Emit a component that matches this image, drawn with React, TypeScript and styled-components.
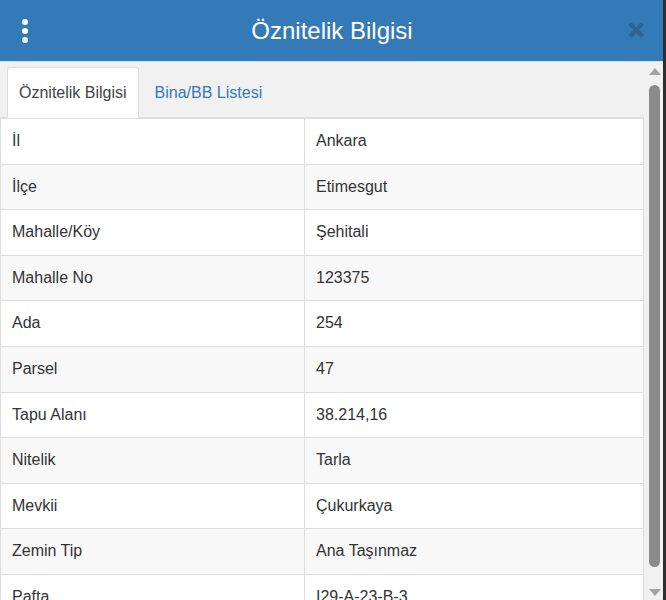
import styled, { createGlobalStyle } from "styled-components";

const GlobalStyle = createGlobalStyle`
    body {
        margin: 0;
        font-family: "Liberation Sans", Arial, sans-serif;
        background: #ffffff;
    }
`;

const Window = styled.div`
    width: 666px;
    height: 600px;
    box-sizing: border-box;
    border-right: 3px solid #2e2e2e;
    display: flex;
    flex-direction: column;
    overflow: hidden;
    background: #f1f1f1;
`;

const Header = styled.header`
    height: 61px;
    flex-shrink: 0;
    background-color: #337ab7;
    display: flex;
    align-items: center;
    justify-content: space-between;
    padding: 0 18px 0 20px;
    border-bottom: 1px solid #d6dfe8;
`;

const MenuButton = styled.div`
    width: 10px;
    display: flex;
    flex-direction: column;
    align-items: center;
    gap: 3px;
`;

const Dot = styled.span`
    width: 6px;
    height: 6px;
    border-radius: 50%;
    background: #ffffff;
`;

const Title = styled.h1`
    margin: 0;
    color: #ffffff;
    font-size: 24px;
    font-weight: normal;
    padding-left: 7px;
`;

const CloseButton = styled.span`
    color: #2a5f8e;
    font-size: 22px;
    font-weight: bold;
    line-height: 1;
    opacity: 0.85;
    -webkit-text-stroke: 1px #2a5f8e;
`;

const Body = styled.div`
    flex: 1;
    display: flex;
    min-height: 0;
`;

const Content = styled.div`
    flex: 1;
    padding-right: 2px;
    display: flex;
    flex-direction: column;
    min-width: 0;
`;

const TabBar = styled.ul`
    margin: 0;
    padding: 5px 0 0 7px;
    list-style-type: none;
    display: flex;
    border-bottom: 1px solid #dddddd;
`;

const Tab = styled.li<{ $active?: boolean }>`
    padding: 14px 11px;
    margin-right: 4px;
    margin-bottom: -1px;
    font-size: 16px;
    line-height: 21px;
    color: ${(p) => (p.$active ? "#444444" : "#337ab7")};
    background: ${(p) => (p.$active ? "#ffffff" : "transparent")};
    border: 1px solid ${(p) => (p.$active ? "#dddddd" : "transparent")};
    border-bottom-color: ${(p) => (p.$active ? "#ffffff" : "transparent")};
    border-radius: 3px 3px 0 0;
`;

const Table = styled.table`
    width: 100%;
    border-collapse: collapse;
    background: #ffffff;
    font-size: 16px;
    color: #333333;
`;

const Row = styled.tr<{ $striped?: boolean }>`
    background: ${(p) => (p.$striped ? "#f8f8f8" : "#ffffff")};
`;

const Cell = styled.td`
    padding: 11px 10px 11px 11px;
    line-height: 22.6px;
    border: 1px solid #dddddd;
    border-bottom: none;
    &:first-child {
        width: 282px;
    }
`;

const Scrollbar = styled.div`
    width: 17px;
    flex-shrink: 0;
    background: #f1f1f1;
    display: flex;
    flex-direction: column;
    align-items: center;
    padding: 6px 0 4px;
    box-sizing: border-box;
`;

const Arrow = styled.span<{ $down?: boolean }>`
    width: 0;
    height: 0;
    border-left: 6px solid transparent;
    border-right: 6px solid transparent;
    ${(p) =>
        p.$down
            ? "border-top: 7px solid #a3a3a3;"
            : "border-bottom: 7px solid #a3a3a3;"}
`;

const Track = styled.div`
    flex: 1;
    width: 100%;
    display: flex;
    justify-content: center;
    padding: 10px 0 22px;
    box-sizing: border-box;
`;

const Thumb = styled.div`
    width: 11px;
    height: 100%;
    border-radius: 6px;
    background: #8a8a8a;
`;

const rows: [string, string][] = [
    ["İl", "Ankara"],
    ["İlçe", "Etimesgut"],
    ["Mahalle/Köy", "Şehitali"],
    ["Mahalle No", "123375"],
    ["Ada", "254"],
    ["Parsel", "47"],
    ["Tapu Alanı", "38.214,16"],
    ["Nitelik", "Tarla"],
    ["Mevkii", "Çukurkaya"],
    ["Zemin Tip", "Ana Taşınmaz"],
    ["Pafta", "I29-A-23-B-3"],
];

export default function App() {
    return (
        <>
            <GlobalStyle />
            <Window>
                <Header>
                    <MenuButton>
                        <Dot />
                        <Dot />
                        <Dot />
                    </MenuButton>
                    <Title>Öznitelik Bilgisi</Title>
                    <CloseButton>✕</CloseButton>
                </Header>
                <Body>
                    <Content>
                        <TabBar>
                            <Tab $active>Öznitelik Bilgisi</Tab>
                            <Tab>Bina/BB Listesi</Tab>
                        </TabBar>
                        <Table>
                            <tbody>
                                {rows.map(([label, value], i) => (
                                    <Row key={label} $striped={i % 2 === 1}>
                                        <Cell>{label}</Cell>
                                        <Cell>{value}</Cell>
                                    </Row>
                                ))}
                            </tbody>
                        </Table>
                    </Content>
                    <Scrollbar>
                        <Arrow />
                        <Track>
                            <Thumb />
                        </Track>
                        <Arrow $down />
                    </Scrollbar>
                </Body>
            </Window>
        </>
    );
}
